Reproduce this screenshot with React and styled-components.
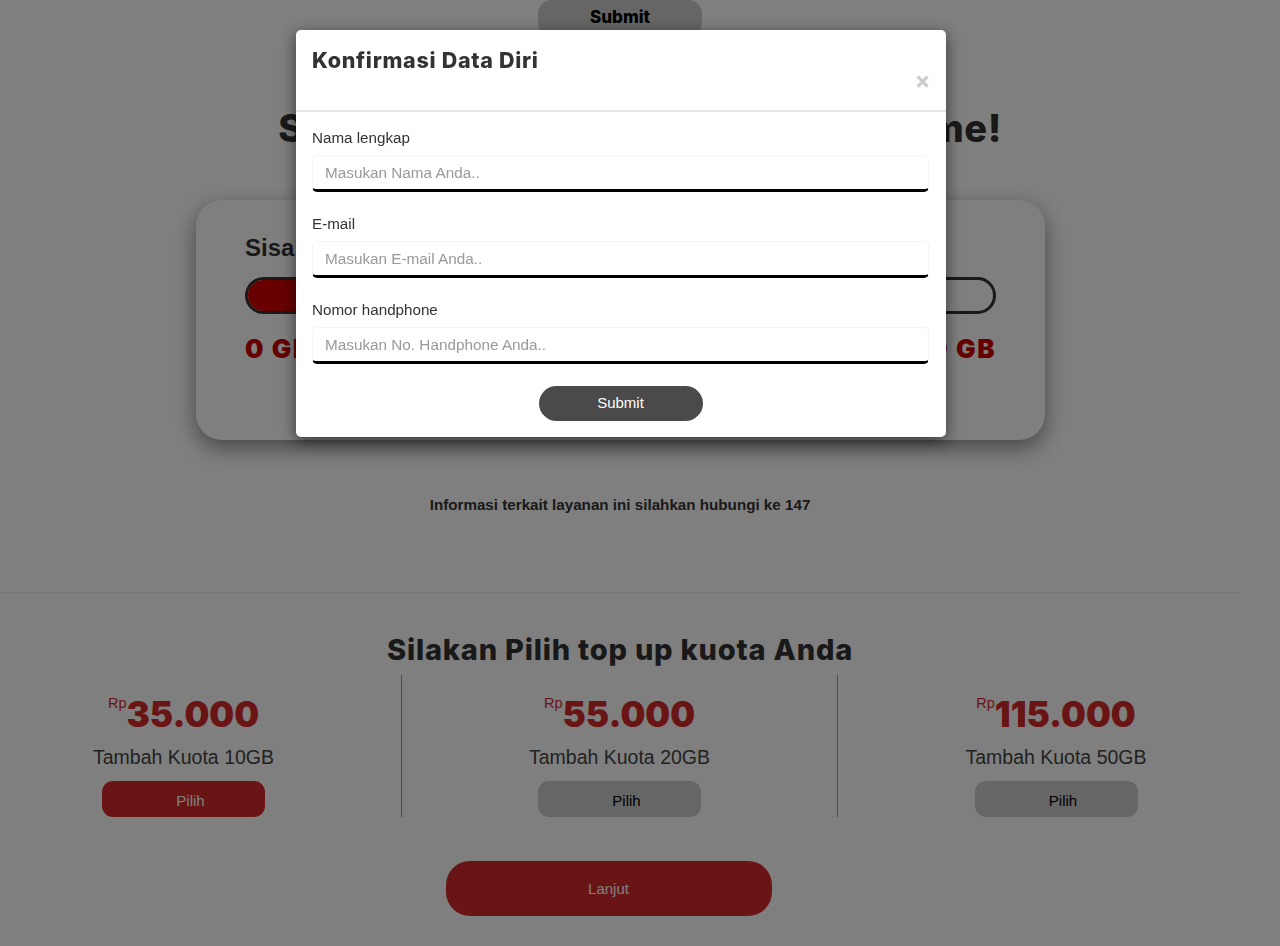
import React from "react";
import styled, { createGlobalStyle } from "styled-components";

const HEAD = `Inter, "Noto Sans", sans-serif`;
const BODY = `"Liberation Sans", Arial, sans-serif`;

const Global = createGlobalStyle`
  html, body { margin: 0; padding: 0; background: #fff; }
  body { height: 946px; overflow: hidden; font-family: ${BODY}; color: #333; }
  * { box-sizing: border-box; }
  ::placeholder { color: #999; opacity: 1; }
`;

const Page = styled.main`
  width: 1240px;
  height: 946px;
  display: flex;
  flex-direction: column;
  align-items: center;
`;
const TopButton = styled.button`
  width: 164px;
  height: 36px;
  flex: none;
  border: 0;
  border-radius: 14px;
  background: #ccc;
  color: #000;
  font: 800 17px ${HEAD};
  padding: 0 0 2px;
`;
const Welcome = styled.h1`
  margin: 69px 0 0 40px;
  height: 46px;
  font: 800 38px/46px ${HEAD};
  letter-spacing: 0.5px;
  color: #333;
  white-space: nowrap;
`;
const QuotaCard = styled.section`
  margin: 49px 0 0 1px;
  width: 849px;
  height: 240px;
  flex: none;
  border-radius: 26px;
  background: #fff;
  box-shadow: 0 8px 22px rgba(0, 0, 0, 0.45);
  padding: 34px 49px 0;
`;
const QuotaTitle = styled.h2`
  margin: 0;
  font: 700 24px/28px ${BODY};
  color: #333;
`;
const Track = styled.div`
  margin-top: 15px;
  height: 37px;
  border: 3px solid #333;
  border-radius: 19px;
  overflow: hidden;
`;
const Fill = styled.div`
  height: 100%;
  background: #d00000;
`;
const Scale = styled.div`
  margin-top: 18px;
  display: flex;
  justify-content: space-between;
  font: 900 26px/34px ${HEAD};
  letter-spacing: 1.5px;
  color: #cc0000;
`;
const Info = styled.p`
  margin: 56px 0 0;
  font: 700 15.2px/18px ${BODY};
  color: #333;
`;
const Rule = styled.hr`
  margin: 78px 0 0;
  width: 100%;
  height: 1px;
  border: 0;
  background: #eee;
  flex: none;
`;
const SectionTitle = styled.h2`
  margin: 38px 0 0;
  font: 800 29px/38px ${HEAD};
  letter-spacing: 0.8px;
  color: #333;
  white-space: nowrap;
`;
const Plans = styled.div`
  margin-top: 6px;
  display: grid;
  grid-template-columns: repeat(3, 436px);
  flex: none;
`;
const Plan = styled.article`
  height: 142px;
  display: flex;
  flex-direction: column;
  align-items: center;
  border-right: ${(p) => (p.$divided ? "1px solid #999" : "0")};
  padding-top: 18px;
`;
const Price = styled.div`
  display: flex;
  align-items: flex-start;
  height: 42px;
  flex: none;
  color: #d42a2a;
`;
const Currency = styled.span`
  font: 400 14.5px/20px ${BODY};
`;
const Amount = styled.span`
  font: 900 35px/42px ${HEAD};
`;
const PlanName = styled.div`
  margin-top: 10px;
  font: 400 19.5px/24px ${BODY};
  color: #444;
`;
const PlanButton = styled.button`
  margin-top: 12px;
  width: 163px;
  height: 36px;
  flex: none;
  border: 0;
  border-radius: 11px;
  padding: 2px 0 0 14px;
  background: ${(p) => (p.$active ? "#d42a2a" : "#ccc")};
  color: ${(p) => (p.$active ? "#fff" : "#000")};
  font: 400 15px ${BODY};
`;
const NextButton = styled.button`
  margin: 44px 0 0 -23px;
  width: 326px;
  height: 55px;
  flex: none;
  border: 0;
  border-radius: 24px;
  background: #d42a2a;
  color: #fff;
  font: 400 15px ${BODY};
`;

const Overlay = styled.div`
  position: fixed;
  inset: 0;
  background: rgba(0, 0, 0, 0.5);
  display: flex;
  justify-content: center;
  align-items: flex-start;
  padding: 30px 38px 0 0;
`;
const Modal = styled.div`
  width: 650px;
  height: 407px;
  background: #fff;
  border-radius: 5px;
  box-shadow: 0 4px 16px rgba(0, 0, 0, 0.6);
`;
const ModalHeader = styled.header`
  height: 82px;
  border-bottom: 2px solid #e5e5e5;
  display: flex;
  justify-content: space-between;
  padding: 16px 16px 0;
`;
const ModalTitle = styled.h3`
  margin: 0;
  font: 800 21.5px/28px ${HEAD};
  letter-spacing: 0.7px;
  color: #333;
`;
const Close = styled.span`
  margin: 25px 1px 0 0;
  font: 700 22px/22px ${BODY};
  -webkit-text-stroke: 0.7px #ccc;
  color: #ccc;
`;
const Form = styled.form`
  padding: 17px 17px 0 16px;
  display: flex;
  flex-direction: column;
`;
const Field = styled.div`
  margin-bottom: ${(p) => p.$gap}px;
`;
const Label = styled.label`
  display: block;
  font: 400 15.2px/18px ${BODY};
  color: #333;
  margin-bottom: 8px;
`;
const Input = styled.input`
  display: block;
  width: 100%;
  height: 37px;
  border: 1px solid #f4f4f4;
  border-bottom: 3px solid #000;
  border-radius: 5px;
  padding: 0 12px;
  background: #fff;
  font: 400 15.3px ${BODY};
  color: #333;
  outline: none;
`;
const Submit = styled.button`
  align-self: center;
  width: 164px;
  height: 35px;
  margin-top: 22px;
  border: 0;
  border-radius: 18px;
  background: #4a4a4a;
  color: #fff;
  font: 400 15px ${BODY};
  padding: 0 0 2px;
`;

const plans = [
  { amount: "35.000", name: "Tambah Kuota 10GB", active: true },
  { amount: "55.000", name: "Tambah Kuota 20GB" },
  { amount: "115.000", name: "Tambah Kuota 50GB" },
];
const fields = [
  { label: "Nama lengkap", placeholder: "Masukan Nama Anda..", gap: 23 },
  { label: "E-mail", placeholder: "Masukan E-mail Anda..", gap: 23 },
  { label: "Nomor handphone", placeholder: "Masukan No. Handphone Anda..", gap: 0 },
];

export default function App() {
  return (
    <>
      <Global />
      <Page>
        <TopButton>Submit</TopButton>
        <Welcome>Selamat Datang Pelanggan IndiHome!</Welcome>
        <QuotaCard>
          <QuotaTitle>Sisa Kuota</QuotaTitle>
          <Track>
            <Fill style={{ width: "40%" }} />
          </Track>
          <Scale>
            <span>0 GB</span>
            <span>100 GB</span>
          </Scale>
        </QuotaCard>
        <Info>Informasi terkait layanan ini silahkan hubungi ke 147</Info>
        <Rule />
        <SectionTitle>Silakan Pilih top up kuota Anda</SectionTitle>
        <Plans>
          {plans.map((p, i) => (
            <Plan key={p.name} $divided={i < 2}>
              <Price>
                <Currency>Rp</Currency>
                <Amount>{p.amount}</Amount>
              </Price>
              <PlanName>{p.name}</PlanName>
              <PlanButton $active={p.active}>Pilih</PlanButton>
            </Plan>
          ))}
        </Plans>
        <NextButton>Lanjut</NextButton>
      </Page>
      <Overlay>
        <Modal>
          <ModalHeader>
            <ModalTitle>Konfirmasi Data Diri</ModalTitle>
            <Close>×</Close>
          </ModalHeader>
          <Form onSubmit={(e) => e.preventDefault()}>
            {fields.map((f) => (
              <Field key={f.label} $gap={f.gap}>
                <Label>{f.label}</Label>
                <Input placeholder={f.placeholder} />
              </Field>
            ))}
            <Submit>Submit</Submit>
          </Form>
        </Modal>
      </Overlay>
    </>
  );
}
